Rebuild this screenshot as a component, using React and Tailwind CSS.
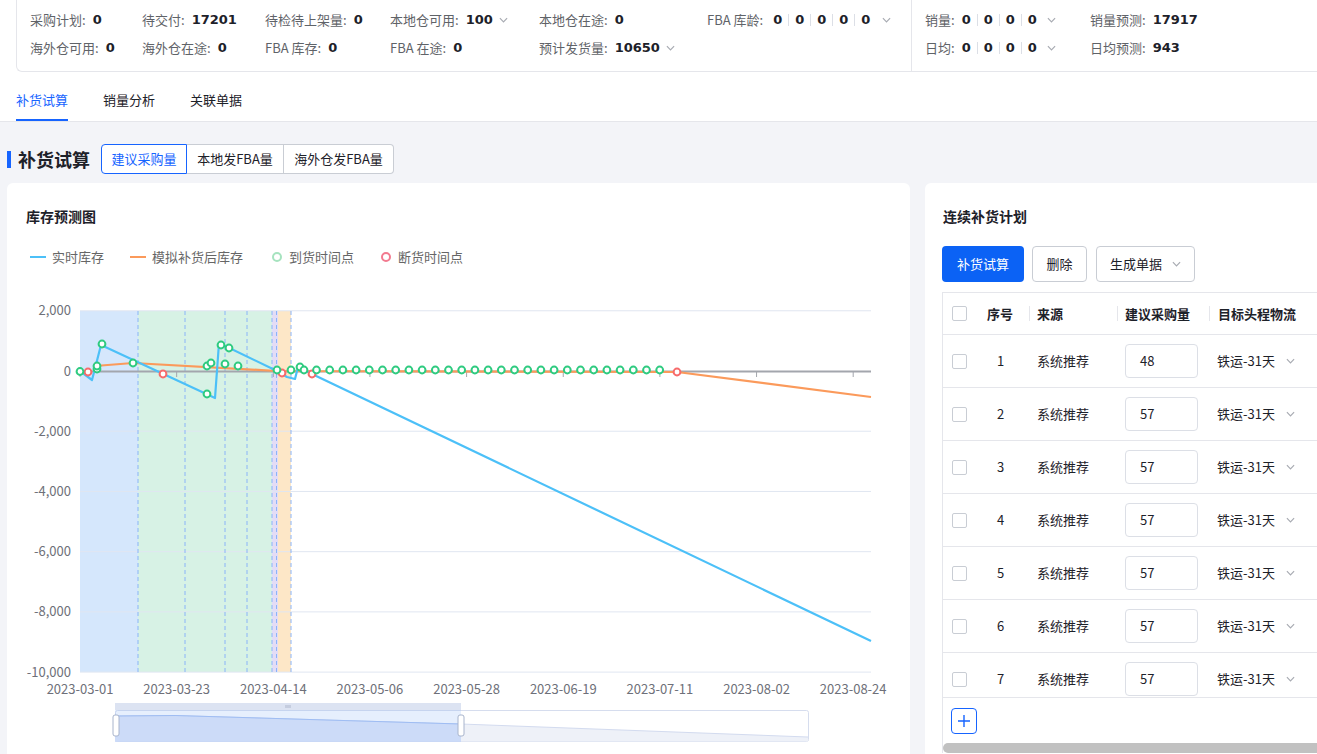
import React from "react";

const FONT = "font-['Noto_Sans_CJK_SC','Liberation_Sans',sans-serif]";
const NUM = "font-['DejaVu_Sans',sans-serif] font-bold text-[#1d2129]";
const AXIS_FONT = "'Noto Sans CJK SC', 'Liberation Sans', sans-serif";

function Chevron({ className }) {
  return (
    <svg viewBox="0 0 10 6" width="9" height="6" className={className} fill="none">
      <polyline points="1,1 5,5 9,1" stroke="currentColor" strokeWidth="1.3" />
    </svg>
  );
}

function Zeros({ count }) {
  return Array.from({ length: count }).map((_, i) => (
    <React.Fragment key={i}>
      {i > 0 && <span className="w-px h-[12px] bg-[#dcdfe6] mx-[6px]" />}
      <span className={NUM}>0</span>
    </React.Fragment>
  ));
}

function Stat({ label, value, chevron, children }) {
  return (
    <div className="flex items-center h-[24px] whitespace-nowrap text-[13px]">
      <span className="text-[#5f6368]">{label}:</span>
      <span className="ml-[7px] flex items-center">
        {children || <span className={NUM}>{value}</span>}
        {chevron && <Chevron className="ml-[6px] text-[#a8abb2]" />}
      </span>
    </div>
  );
}

const Y_TICKS = [
  [2000, "2,000"],
  [0, "0"],
  [-2000, "-2,000"],
  [-4000, "-4,000"],
  [-6000, "-6,000"],
  [-8000, "-8,000"],
  [-10000, "-10,000"],
];
const X_TICKS = [
  "2023-03-01",
  "2023-03-23",
  "2023-04-14",
  "2023-05-06",
  "2023-05-28",
  "2023-06-19",
  "2023-07-11",
  "2023-08-02",
  "2023-08-24",
];
const yOf = (v) => 371 - v * 0.03011;
const xOf = (i) => 80 + i * 96.65;

const BLUE_LINE = [
  [80, 371], [92, 380], [101, 345], [215, 398], [219, 343], [277, 371],
  [287, 377], [295, 379], [298, 367], [304, 370], [312, 374], [871, 641],
];
const ORANGE_LINE = [[95, 366], [133, 363], [277, 371], [677, 372], [871, 397]];
const GREEN_DOTS = [
  [80, 371.5], [97, 369], [97, 366], [102, 344], [133, 363], [207, 366], [211, 363],
  [207, 394], [221, 345], [229, 348], [225, 364], [238, 366], [277, 370], [291, 370],
  [300, 367], [304, 370],
  ...Array.from({ length: 27 }).map((_, i) => [316.5 + i * 13.2, 370]),
];
const RED_DOTS = [[88, 372], [163, 374], [282, 373], [312, 374], [677, 372]];
const DASHES = [138, 185, 225, 247, 272, 276.5, 291];

const pts = (arr) => arr.map((p) => p.join(",")).join(" ");

function StockChart() {
  return (
    <svg width="903" height="474" className="block mt-[13px]">
      <g transform="translate(-7,-280)">
        {/* phase bands */}
        <rect x="80" y="311" width="58" height="361" fill="#d5e7fc" />
        <rect x="138" y="311" width="134" height="361" fill="#d7f2e5" />
        <rect x="272" y="311" width="6" height="361" fill="#e3dcf6" />
        <rect x="278" y="311" width="13" height="361" fill="#fde7c7" />

        {Y_TICKS.map(([v, t]) => (
          <g key={t}>
            {v !== 0 && (
              <line x1="80" x2="871" y1={yOf(v)} y2={yOf(v)} stroke="#e0e6f1" strokeWidth="1" />
            )}
            <text
              x="71"
              y={yOf(v) + 4.5}
              textAnchor="end"
              fontSize="13"
              fill="#6e7079"
              fontFamily={AXIS_FONT}
            >
              {t}
            </text>
          </g>
        ))}

        {DASHES.map((x) => (
          <line key={x} x1={x} x2={x} y1="311" y2="672" stroke="#8ab4f8" strokeWidth="1" strokeDasharray="4 3" />
        ))}

        {/* zero axis */}
        <line x1="80" x2="871" y1="371.5" y2="371.5" stroke="#a3a6ad" strokeWidth="1.8" />
        {X_TICKS.map((d, i) => (
          <g key={d}>
            <line x1={xOf(i)} x2={xOf(i)} y1="372" y2="377" stroke="#a3a6ad" strokeWidth="1" />
            <text
              x={xOf(i)}
              y="693.5"
              textAnchor="middle"
              fontSize="13"
              fill="#6e7079"
              fontFamily={AXIS_FONT}
            >
              {d}
            </text>
          </g>
        ))}

        <polyline points={pts(ORANGE_LINE)} fill="none" stroke="#fb9a5b" strokeWidth="2.2" strokeLinejoin="round" />
        <polyline points={pts(BLUE_LINE)} fill="none" stroke="#4cc0f8" strokeWidth="2.2" strokeLinejoin="round" />

        {RED_DOTS.map(([x, y], i) => (
          <circle key={"r" + i} cx={x} cy={y} r="3.4" fill="#fff" stroke="#f76b6b" strokeWidth="2" />
        ))}
        {GREEN_DOTS.map(([x, y], i) => (
          <circle key={"g" + i} cx={x} cy={y} r="3.4" fill="#fff" stroke="#2fcb80" strokeWidth="2" />
        ))}

        {/* data zoom */}
        <rect x="115.5" y="710.5" width="693" height="31" rx="2" fill="#fff" stroke="#d6ddee" />
        <path d="M115,716 L175,715.5 L461,724 L808,737 L808,741.5 L115,741.5 Z" fill="#eef1f8" />
        <path d="M115,716 L175,715.5 L461,724 L808,737" fill="none" stroke="#d3dbef" strokeWidth="1" />
        <rect x="115" y="710" width="346" height="32" fill="#8fb4f5" fillOpacity="0.22" />
        <path d="M115,716 L175,715.5 L461,724 L461,742 L115,742 Z" fill="#c5d6f8" fillOpacity="0.6" />
        <path d="M115,716 L175,715.5 L461,724" fill="none" stroke="#9fbdf3" strokeWidth="1" />
        <rect x="115" y="703" width="346" height="7" fill="#dce3f2" />
        <line x1="286" x2="286" y1="705" y2="708" stroke="#aeb7cc" />
        <line x1="288" x2="288" y1="705" y2="708" stroke="#aeb7cc" />
        <line x1="290" x2="290" y1="705" y2="708" stroke="#aeb7cc" />
        <rect x="113" y="715" width="6" height="21" rx="2" fill="#fff" stroke="#a8b4cc" />
        <rect x="458" y="715" width="6" height="21" rx="2" fill="#fff" stroke="#a8b4cc" />
      </g>
    </svg>
  );
}

function Checkbox() {
  return <span className="block w-[15px] h-[15px] border border-[#c9cdd4] rounded-[2px] bg-white" />;
}

const ROWS = [
  [1, 48], [2, 57], [3, 57], [4, 57], [5, 57], [6, 57], [7, 57],
];

export default function App() {
  return (
    <div className={"w-[1317px] h-[754px] overflow-hidden bg-[#f3f4f8] text-[#1d2129] " + FONT}>
      <div className="bg-white">
        {/* stats panel */}
        <div className="ml-[16px] h-[72px] border-l border-b border-[#e5e6eb] rounded-bl-[6px] flex">
          <div className="w-[894px] shrink-0 pl-[13px] pt-[8px] grid grid-cols-[112px_123px_125px_149px_168px_1fr] gap-y-[4px] content-start">
            <Stat label="采购计划" value="0" />
            <Stat label="待交付" value="17201" />
            <Stat label="待检待上架量" value="0" />
            <Stat label="本地仓可用" value="100" chevron />
            <Stat label="本地仓在途" value="0" />
            <Stat label="FBA 库龄">
              <span className="ml-[3px]" />
              <Zeros count={5} />
              <Chevron className="ml-[12px] text-[#a8abb2]" />
            </Stat>
            <Stat label="海外仓可用" value="0" />
            <Stat label="海外仓在途" value="0" />
            <Stat label="FBA 库存" value="0" />
            <Stat label="FBA 在途" value="0" />
            <Stat label="预计发货量" value="10650" chevron />
          </div>
          <div className="flex-1 border-l border-[#e5e6eb] pl-[13px] pt-[8px] grid grid-cols-[165px_1fr] gap-y-[4px] content-start">
            <Stat label="销量">
              <Zeros count={4} />
              <Chevron className="ml-[10px] text-[#a8abb2]" />
            </Stat>
            <Stat label="销量预测" value="17917" />
            <Stat label="日均">
              <Zeros count={4} />
              <Chevron className="ml-[10px] text-[#a8abb2]" />
            </Stat>
            <Stat label="日均预测" value="943" />
          </div>
        </div>

        {/* tabs */}
        <div className="h-[50px] border-b border-[#e5e6eb] flex pl-[16px] gap-[35px] text-[13px]">
          <div className="flex items-center pt-[8px] border-b-2 border-[#1664ff] text-[#1664ff]">补货试算</div>
          <div className="flex items-center pt-[8px] border-b-2 border-transparent text-[#1d2129]">销量分析</div>
          <div className="flex items-center pt-[8px] border-b-2 border-transparent text-[#1d2129]">关联单据</div>
        </div>
      </div>

      <div className="px-[7px]">
        {/* heading */}
        <div className="mt-[22px] h-[30px] flex items-center">
          <span className="w-[4px] h-[17px] bg-[#1664ff]" />
          <span className="ml-[7px] text-[18px] font-bold leading-[24px]">补货试算</span>
          <div className="ml-[11px] flex h-[30px] text-[13px]">
            <div className="w-[86px] border border-[#1664ff] text-[#1664ff] rounded-l-[4px] flex items-center justify-center bg-white">
              建议采购量
            </div>
            <div className="w-[97px] border-y border-r border-[#c9cdd4] flex items-center justify-center bg-white">
              本地发FBA量
            </div>
            <div className="w-[110px] border-y border-r border-[#c9cdd4] rounded-r-[4px] flex items-center justify-center bg-white">
              海外仓发FBA量
            </div>
          </div>
        </div>

        <div className="mt-[9px] flex gap-[15px]">
          {/* chart card */}
          <div className="w-[903px] h-[620px] shrink-0 bg-white rounded-[6px]">
            <div className="pt-[23px] pl-[19px] text-[14px] font-bold leading-[20px]">库存预测图</div>
            <div className="mt-[21px] h-[20px] flex items-center text-[13px] text-[#666] pl-[23px]">
              <span className="w-[16px] h-[2px] bg-[#4cc0f8]" />
              <span className="ml-[6px]">实时库存</span>
              <span className="ml-[26px] w-[16px] h-[2px] bg-[#fb9a5b]" />
              <span className="ml-[6px]">模拟补货后库存</span>
              <span className="ml-[29px] w-[10px] h-[10px] rounded-full border-2 border-[#a6e3bf]" />
              <span className="ml-[7px]">到货时间点</span>
              <span className="ml-[27px] w-[10px] h-[10px] rounded-full border-2 border-[#f27a8f]" />
              <span className="ml-[7px]">断货时间点</span>
            </div>
            <StockChart />
          </div>

          {/* plan card */}
          <div className="w-[440px] h-[620px] shrink-0 bg-white rounded-[6px] pl-[17px]">
            <div className="pt-[23px] pl-[1px] text-[14px] font-bold leading-[20px]">连续补货计划</div>
            <div className="mt-[20px] flex gap-[8px] h-[36px] text-[13px]">
              <div className="w-[82px] bg-[#0b62f5] text-white rounded-[4px] flex items-center justify-center">补货试算</div>
              <div className="w-[55px] border border-[#c9cdd4] rounded-[4px] flex items-center justify-center">删除</div>
              <div className="ml-[1px] w-[99px] border border-[#c9cdd4] rounded-[4px] flex items-center justify-center">
                生成单据
                <Chevron className="ml-[10px] text-[#a8abb2]" />
              </div>
            </div>

            <div className="mt-[10px] border-l border-t border-[#e5e6eb] text-[13px]">
              <div className="h-[42px] border-b border-[#e5e6eb] flex items-center font-bold">
                <div className="w-[33px] flex justify-center"><Checkbox /></div>
                <div className="w-[53px] pl-[11px]">序号</div>
                <div className="w-[88px] flex items-center">
                  <span className="w-px h-[15px] bg-[#e5e6eb]" />
                  <span className="ml-[7px]">来源</span>
                </div>
                <div className="w-[92px] flex items-center">
                  <span className="w-px h-[15px] bg-[#e5e6eb]" />
                  <span className="ml-[7px]">建议采购量</span>
                </div>
                <div className="flex-1 flex items-center">
                  <span className="w-px h-[15px] bg-[#e5e6eb]" />
                  <span className="ml-[8px]">目标头程物流</span>
                </div>
              </div>
              <div className="h-[363px] overflow-hidden border-b border-[#e5e6eb]">
                {ROWS.map(([n, q]) => (
                  <div key={n} className="h-[53px] shrink-0 border-b border-[#e5e6eb] flex items-center">
                    <div className="w-[33px] flex justify-center"><Checkbox /></div>
                    <div className="w-[53px] pl-[21px]">{n}</div>
                    <div className="w-[88px] pl-[8px]">系统推荐</div>
                    <div className="w-[92px] pl-[8px]">
                      <div className="w-[73px] h-[34px] border border-[#dcdfe6] rounded-[4px] pl-[14px] flex items-center">{q}</div>
                    </div>
                    <div className="flex-1 pl-[8px] flex items-center">
                      铁运-31天
                      <Chevron className="ml-[11px] text-[#a8abb2]" />
                    </div>
                  </div>
                ))}
              </div>
              <div className="ml-[8px] mt-[10px] w-[26px] h-[26px] border border-[#1664ff] rounded-[4px] flex items-center justify-center">
                <svg width="14" height="14" viewBox="0 0 14 14">
                  <path d="M7 1 V13 M1 7 H13" stroke="#1664ff" strokeWidth="1.4" />
                </svg>
              </div>
              <div className="mt-[9px] h-[10px] rounded-full bg-[#c1c1c1]" />
            </div>
          </div>
        </div>
      </div>
    </div>
  );
}
